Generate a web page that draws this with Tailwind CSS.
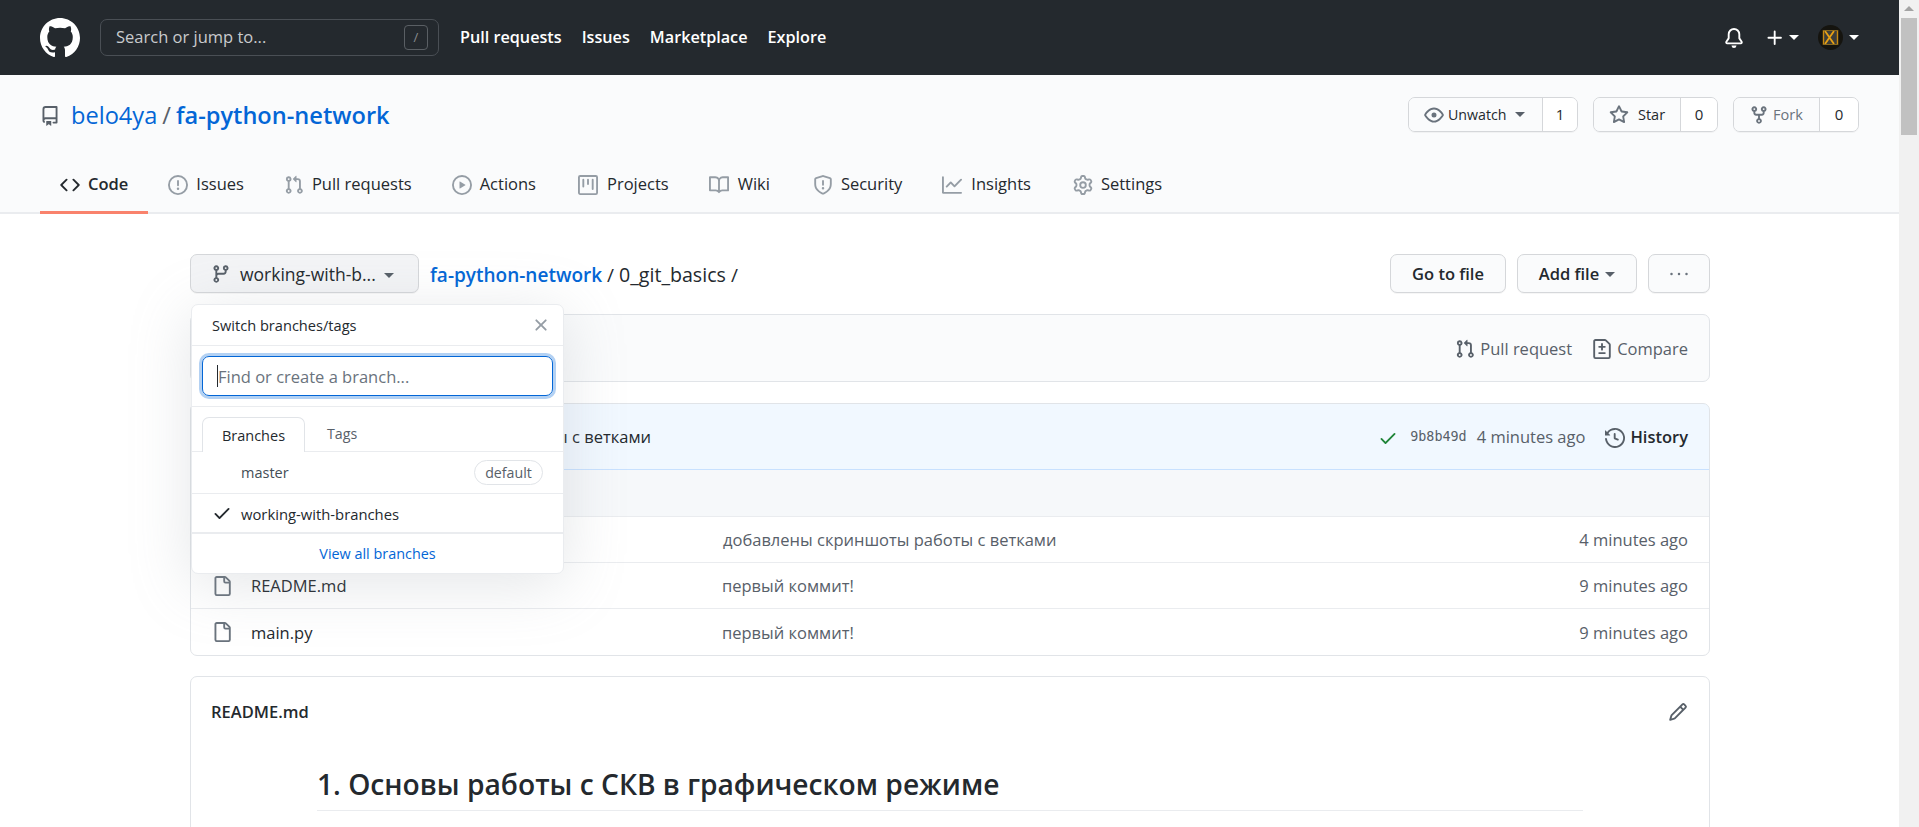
<!DOCTYPE html>
<html lang="en">
<head>
<meta charset="utf-8">
<title>fa-python-network</title>
<script src="https://cdn.jsdelivr.net/npm/@tailwindcss/browser@4"></script>
</head>
<body class="h-[827px] w-[1919px] overflow-hidden bg-white text-[#24292e] font-['Open_Sans','Noto_Sans',sans-serif] text-[16.5px]">
<div class="flex h-[827px]">
<div class="w-[1899px] h-[827px] overflow-hidden flex flex-col">

  <header class="h-[75px] shrink-0 bg-[#24292e] flex items-center pl-[40px] pr-[40px] text-white">
    <svg class="w-[40px] h-[40px] fill-white" viewBox="0 0 16 16"><path d="M8 0C3.58 0 0 3.58 0 8c0 3.54 2.29 6.53 5.47 7.59.4.07.55-.17.55-.38 0-.19-.01-.82-.01-1.49-2.01.37-2.53-.49-2.69-.94-.09-.23-.48-.94-.82-1.13-.28-.15-.68-.52-.01-.53.63-.01 1.08.58 1.23.82.72 1.21 1.87.87 2.33.66.07-.52.28-.87.51-1.07-1.78-.2-3.64-.89-3.64-3.95 0-.87.31-1.59.82-2.15-.08-.2-.36-1.02.08-2.12 0 0 .67-.21 2.2.82.64-.18 1.32-.27 2-.27.68 0 1.36.09 2 .27 1.53-1.04 2.2-.82 2.2-.82.44 1.1.16 1.92.08 2.12.51.56.82 1.27.82 2.15 0 3.07-1.87 3.75-3.65 3.95.29.25.54.73.54 1.48 0 1.07-.01 1.93-.01 2.2 0 .21.15.46.55.38A8.013 8.013 0 0016 8c0-4.42-3.58-8-8-8z"/></svg>
    <div class="ml-[20px] w-[339px] h-[37px] rounded-[7px] border border-[#4a4f55] flex items-center pl-[15px] pr-[10px] justify-between">
      <span class="text-[#c9cbcd] text-[16.5px]">Search or jump to...</span>
      <span class="w-[24px] h-[25px] rounded-[4px] border border-[#5a5f64] text-[#8a8d90] text-[13px] flex items-center justify-center">/</span>
    </div>
    <nav class="ml-[21px] flex gap-[20px] font-semibold text-[16.2px]">
      <span>Pull requests</span><span>Issues</span><span>Marketplace</span><span>Explore</span>
    </nav>
    <div class="ml-auto flex items-center">
      <svg class="w-[20px] h-[20px] fill-white" viewBox="0 0 16 16"><path d="M8 16a2 2 0 001.985-1.75c.017-.137-.097-.25-.235-.25h-3.5c-.138 0-.252.113-.235.25A2 2 0 008 16z"/><path fill-rule="evenodd" d="M8 1.5A3.5 3.5 0 004.5 5v2.947c0 .346-.102.683-.294.97l-1.703 2.556a.018.018 0 00-.003.01l.001.006c0 .002.002.004.004.006a.017.017 0 00.006.004l.007.001h10.964l.007-.001a.016.016 0 00.006-.004.016.016 0 00.004-.006l.001-.007a.017.017 0 00-.003-.01l-1.703-2.554a1.75 1.75 0 01-.294-.97V5A3.5 3.5 0 008 1.5zM3 5a5 5 0 0110 0v2.947c0 .05.015.098.042.139l1.703 2.555A1.518 1.518 0 0113.482 13H2.518a1.518 1.518 0 01-1.263-2.36l1.703-2.554A.25.25 0 003 7.947V5z"/></svg>
      <svg class="ml-[21px] w-[20px] h-[20px] fill-white" viewBox="0 0 16 16"><path d="M7.75 2a.75.75 0 01.75.75V7h4.25a.75.75 0 110 1.5H8.5v4.25a.75.75 0 11-1.5 0V8.5H2.75a.75.75 0 010-1.5H7V2.75A.75.75 0 017.75 2z"/></svg>
      <span class="ml-[4px] w-0 h-0 border-x-[5px] border-x-transparent border-t-[5px] border-t-white"></span>
      <span class="ml-[19px] w-[25px] h-[25px] rounded-full bg-[#15140f] flex items-center justify-center">
        <svg class="w-[17px] h-[17px]" viewBox="0 0 17 17" fill="none"><rect x="1" y="1" width="15" height="15" fill="#3c3d3a"/><path d="M3 2l9 13M12 2L3 15" stroke="#e8a013" stroke-width="1.8"/><path d="M1.5 1v15M15.5 1v15" stroke="#c98a10" stroke-width="1.4"/><path d="M1 1.5h15M1 15.5h15" stroke="#8a6a20" stroke-width="1"/></svg>
      </span>
      <span class="ml-[6px] w-0 h-0 border-x-[5px] border-x-transparent border-t-[5px] border-t-white"></span>
    </div>
  </header>

  <section class="h-[139px] shrink-0 bg-[#fafbfc] border-b-2 border-[#eaecef] flex flex-col">
    <div class="h-[80px] pt-[22px] pl-[40px] pr-[40px] flex justify-between items-start">
      <div class="flex items-center h-[35px] mt-[1px] text-[23.6px] text-[#0366d6]">
        <svg class="w-[20px] h-[20px] fill-[#586069] mr-[11px]" viewBox="0 0 16 16"><path fill-rule="evenodd" d="M2 2.5A2.5 2.5 0 014.5 0h8.75a.75.75 0 01.75.75v12.5a.75.75 0 01-.75.75h-2.5a.75.75 0 110-1.5h1.75v-2h-8a1 1 0 00-.714 1.7.75.75 0 01-1.072 1.05A2.495 2.495 0 012 11.5v-9zm10.5-1V9h-8c-.356 0-.694.074-1 .208V2.5a1 1 0 011-1h8zM5 12.25v3.25a.25.25 0 00.4.2l1.45-1.087a.25.25 0 01.3 0L8.6 15.7a.25.25 0 00.4-.2v-3.25a.25.25 0 00-.25-.25h-3.5a.25.25 0 00-.25.25z"/></svg>
        <span>belo4ya</span><span class="mx-[5px] text-[#586069]">/</span><span class="font-semibold">fa-python-network</span>
      </div>
      <div class="flex gap-[15px] text-[15px] h-[35px]">
        <div class="flex h-[35px] rounded-[7px] border border-[#d5d7da] overflow-hidden shadow-[0_1px_0_rgba(27,31,35,0.04)]">
          <span class="w-[134px] bg-[#fafbfc] flex items-center pl-[15px] border-r border-[#d5d7da]">
            <svg class="w-[20px] h-[20px] fill-[#6a737d] mr-[4px]" viewBox="0 0 16 16"><path fill-rule="evenodd" d="M1.679 7.932c.412-.621 1.242-1.75 2.366-2.717C5.175 4.242 6.527 3.5 8 3.5c1.473 0 2.824.742 3.955 1.715 1.124.967 1.954 2.096 2.366 2.717a.119.119 0 010 .136c-.412.621-1.242 1.75-2.366 2.717C10.825 11.758 9.473 12.5 8 12.5c-1.473 0-2.824-.742-3.955-1.715C2.92 9.818 2.09 8.69 1.679 8.068a.119.119 0 010-.136zM8 2c-1.981 0-3.67.992-4.933 2.078C1.797 5.169.88 6.423.43 7.1a1.619 1.619 0 000 1.798c.45.678 1.367 1.932 2.637 3.024C4.329 13.008 6.019 14 8 14c1.981 0 3.67-.992 4.933-2.078 1.27-1.091 2.187-2.345 2.637-3.023a1.619 1.619 0 000-1.798c-.45-.678-1.367-1.932-2.637-3.023C11.671 2.992 9.981 2 8 2zm0 8a2 2 0 100-4 2 2 0 000 4z"/></svg>
            <span class="text-[14.2px] font-medium">Unwatch</span>
            <span class="ml-[9px] w-0 h-0 border-x-[5px] border-x-transparent border-t-[5px] border-t-[#586069]"></span>
          </span>
          <span class="w-[34px] bg-white flex items-center justify-center font-medium">1</span>
        </div>
        <div class="flex h-[35px] rounded-[7px] border border-[#d5d7da] overflow-hidden shadow-[0_1px_0_rgba(27,31,35,0.04)]">
          <span class="w-[87px] bg-[#fafbfc] flex items-center pl-[15px] border-r border-[#d5d7da]">
            <svg class="w-[20px] h-[20px] fill-[#6a737d] mr-[9px]" viewBox="0 0 16 16"><path fill-rule="evenodd" d="M8 .25a.75.75 0 01.673.418l1.882 3.815 4.21.612a.75.75 0 01.416 1.279l-3.046 2.97.719 4.192a.75.75 0 01-1.088.791L8 12.347l-3.766 1.98a.75.75 0 01-1.088-.79l.72-4.194L.818 6.374a.75.75 0 01.416-1.28l4.21-.611L7.327.668A.75.75 0 018 .25zm0 2.445L6.615 5.5a.75.75 0 01-.564.41l-3.097.45 2.24 2.184a.75.75 0 01.216.664l-.528 3.084 2.769-1.456a.75.75 0 01.698 0l2.77 1.456-.53-3.084a.75.75 0 01.216-.664l2.24-2.183-3.096-.45a.75.75 0 01-.564-.41L8 2.694v.001z"/></svg>
            <span class="text-[14.5px] font-medium">Star</span>
          </span>
          <span class="w-[36px] bg-white flex items-center justify-center font-medium">0</span>
        </div>
        <div class="flex h-[35px] rounded-[7px] border border-[#d5d7da] overflow-hidden shadow-[0_1px_0_rgba(27,31,35,0.04)]">
          <span class="w-[86px] bg-[#fafbfc] flex items-center pl-[15px] border-r border-[#d5d7da]">
            <svg class="w-[20px] h-[20px] fill-[#6a737d] mr-[4px]" viewBox="0 0 16 16"><path fill-rule="evenodd" d="M5 3.25a.75.75 0 11-1.5 0 .75.75 0 011.5 0zm0 2.122a2.25 2.25 0 10-1.5 0v.878A2.25 2.25 0 005.75 8.5h1.5v2.128a2.251 2.251 0 101.5 0V8.5h1.5a2.25 2.25 0 002.25-2.25v-.878a2.25 2.25 0 10-1.5 0v.878a.75.75 0 01-.75.75h-4.5A.75.75 0 015 6.25v-.878zm3.75 7.378a.75.75 0 11-1.5 0 .75.75 0 011.5 0zm3-8.75a.75.75 0 100-1.5.75.75 0 000 1.5z"/></svg>
            <span class="text-[14.5px] font-medium text-[#6a737d]">Fork</span>
          </span>
          <span class="w-[38px] bg-white flex items-center justify-center font-medium">0</span>
        </div>
      </div>
    </div>
    <nav class="flex pl-[40px] h-[57px] pt-[2px] text-[16.5px] text-[#24292e]">
      <span class="relative flex items-center gap-[8px] px-[20px] font-semibold after:absolute after:left-0 after:right-0 after:bottom-[-2px] after:h-[3px] after:bg-[#f9826c]"><svg class="w-[20px] h-[20px] fill-[#24292e]" viewBox="0 0 16 16"><path fill-rule="evenodd" d="M4.72 3.22a.75.75 0 011.06 1.06L2.06 8l3.72 3.72a.75.75 0 11-1.06 1.06L.47 8.53a.75.75 0 010-1.06l4.25-4.25zm6.56 0a.75.75 0 10-1.06 1.06L13.94 8l-3.72 3.72a.75.75 0 101.06 1.06l4.25-4.25a.75.75 0 000-1.06l-4.25-4.25z"/></svg>Code</span>
      <span class="flex items-center gap-[8px] px-[20px]"><svg class="w-[20px] h-[20px] fill-[#959da5]" viewBox="0 0 16 16"><path fill-rule="evenodd" d="M8 1.5a6.5 6.5 0 100 13 6.5 6.5 0 000-13zM0 8a8 8 0 1116 0A8 8 0 010 8zm9 3a1 1 0 11-2 0 1 1 0 012 0zm-.25-6.25a.75.75 0 00-1.5 0v3.5a.75.75 0 001.5 0v-3.5z"/></svg>Issues</span>
      <span class="flex items-center gap-[8px] px-[20px]"><svg class="w-[20px] h-[20px] fill-[#959da5]" viewBox="0 0 16 16"><path fill-rule="evenodd" d="M7.177 3.073L9.573.677A.25.25 0 0110 .854v4.792a.25.25 0 01-.427.177L7.177 3.427a.25.25 0 010-.354zM3.75 2.5a.75.75 0 100 1.5.75.75 0 000-1.5zm-2.25.75a2.25 2.25 0 113 2.122v5.256a2.251 2.251 0 11-1.5 0V5.372A2.25 2.25 0 011.5 3.25zM11 2.5h-1V4h1a1 1 0 011 1v5.628a2.251 2.251 0 101.5 0V5A2.5 2.5 0 0011 2.5zm1 10.25a.75.75 0 111.5 0 .75.75 0 01-1.5 0zM3.75 12a.75.75 0 100 1.5.75.75 0 000-1.5z"/></svg>Pull requests</span>
      <span class="flex items-center gap-[8px] pl-[20px] pr-[22px]"><svg class="w-[20px] h-[20px] fill-[#959da5]" viewBox="0 0 16 16"><path fill-rule="evenodd" d="M1.5 8a6.5 6.5 0 1113 0 6.5 6.5 0 01-13 0zM8 0a8 8 0 100 16A8 8 0 008 0zM6.379 5.227A.25.25 0 006 5.442v5.117a.25.25 0 00.379.214l4.264-2.559a.25.25 0 000-.428L6.379 5.227z"/></svg>Actions</span>
      <span class="flex items-center gap-[9px] px-[20px]"><svg class="w-[20px] h-[20px] fill-[#959da5]" viewBox="0 0 16 16"><path fill-rule="evenodd" d="M1.75 0A1.75 1.75 0 000 1.75v12.5C0 15.216.784 16 1.75 16h12.5A1.75 1.75 0 0016 14.25V1.75A1.75 1.75 0 0014.25 0H1.75zM1.5 1.75a.25.25 0 01.25-.25h12.5a.25.25 0 01.25.25v12.5a.25.25 0 01-.25.25H1.75a.25.25 0 01-.25-.25V1.75zM11.75 3a.75.75 0 00-.75.75v7.5a.75.75 0 001.5 0v-7.5a.75.75 0 00-.75-.75zm-8.25.75a.75.75 0 011.5 0v5.5a.75.75 0 01-1.5 0v-5.5zM8 3a.75.75 0 00-.75.75v3.5a.75.75 0 001.5 0v-3.5A.75.75 0 008 3z"/></svg>Projects</span>
      <span class="flex items-center gap-[9px] pl-[20px] pr-[23px]"><svg class="w-[20px] h-[20px] fill-[#959da5]" viewBox="0 0 16 16"><path fill-rule="evenodd" d="M0 1.75A.75.75 0 01.75 1h4.253c1.227 0 2.317.59 3 1.501A3.744 3.744 0 0111.006 1h4.245a.75.75 0 01.75.75v10.5a.75.75 0 01-.75.75h-4.507a2.25 2.25 0 00-1.591.659l-.622.621a.75.75 0 01-1.06 0l-.622-.621A2.25 2.25 0 005.258 13H.75a.75.75 0 01-.75-.75V1.75zm8.755 3a2.25 2.25 0 012.25-2.25H14.5v9h-3.757c-.71 0-1.4.201-1.992.572l.004-7.322zm-1.504 7.324l.004-5.073-.002-2.253A2.25 2.25 0 005.003 2.5H1.5v9h3.757a3.75 3.75 0 011.994.574z"/></svg>Wiki</span>
      <span class="flex items-center gap-[8px] px-[20px]"><svg class="w-[20px] h-[20px] fill-[#959da5]" viewBox="0 0 16 16"><path fill-rule="evenodd" d="M7.467.133a1.75 1.75 0 011.066 0l5.25 1.68A1.75 1.75 0 0115 3.48V7c0 1.566-.32 3.182-1.303 4.682-.983 1.498-2.585 2.813-5.032 3.855a1.7 1.7 0 01-1.33 0c-2.447-1.042-4.049-2.357-5.032-3.855C1.32 10.182 1 8.566 1 7V3.48a1.75 1.75 0 011.217-1.667l5.25-1.68zm.61 1.429a.25.25 0 00-.153 0l-5.25 1.68a.25.25 0 00-.174.238V7c0 1.358.275 2.666 1.057 3.86.784 1.194 2.121 2.34 4.366 3.297a.2.2 0 00.154 0c2.245-.956 3.582-2.104 4.366-3.298C13.225 9.666 13.5 8.36 13.5 7V3.48a.25.25 0 00-.174-.237l-5.25-1.68zM9 10.5a1 1 0 11-2 0 1 1 0 012 0zm-.25-5.75a.75.75 0 10-1.5 0v3a.75.75 0 001.5 0v-3z"/></svg>Security</span>
      <span class="flex items-center gap-[9px] pl-[20px] pr-[22px]"><svg class="w-[20px] h-[20px] fill-[#959da5]" viewBox="0 0 16 16"><path fill-rule="evenodd" d="M1.5 1.75a.75.75 0 00-1.5 0v12.5c0 .414.336.75.75.75h14.5a.75.75 0 000-1.5H1.5V1.75zm14.28 2.53a.75.75 0 00-1.06-1.06L10 7.94 7.53 5.47a.75.75 0 00-1.06 0L3.22 8.72a.75.75 0 001.06 1.06L7 7.06l2.47 2.47a.75.75 0 001.06 0l5.25-5.25z"/></svg>Insights</span>
      <span class="flex items-center gap-[8px] px-[20px]"><svg class="w-[20px] h-[20px] fill-[#959da5]" viewBox="0 0 16 16"><path fill-rule="evenodd" d="M7.429 1.525a6.593 6.593 0 011.142 0c.036.003.108.036.137.146l.289 1.105c.147.56.55.967.997 1.189.174.086.341.183.501.29.417.278.97.423 1.53.27l1.102-.303c.11-.03.175.016.195.046.219.31.41.641.573.989.014.031.022.11-.059.19l-.815.806c-.411.406-.562.957-.53 1.456a4.588 4.588 0 010 .582c-.032.499.119 1.05.53 1.456l.815.806c.08.08.073.159.059.19a6.494 6.494 0 01-.573.99c-.02.029-.086.074-.195.045l-1.103-.303c-.559-.153-1.112-.008-1.529.27-.16.107-.327.204-.5.29-.449.222-.851.628-.998 1.189l-.289 1.105c-.029.11-.101.143-.137.146a6.613 6.613 0 01-1.142 0c-.036-.003-.108-.037-.137-.146l-.289-1.105c-.147-.56-.55-.967-.997-1.189a4.502 4.502 0 01-.501-.29c-.417-.278-.97-.423-1.53-.27l-1.102.303c-.11.03-.175-.016-.195-.046a6.492 6.492 0 01-.573-.989c-.014-.031-.022-.11.059-.19l.815-.806c.411-.406.562-.957.53-1.456a4.587 4.587 0 010-.582c.032-.499-.119-1.05-.53-1.456l-.815-.806c-.08-.08-.073-.159-.059-.19a6.44 6.44 0 01.573-.99c.02-.029.086-.075.195-.045l1.103.303c.559.153 1.112.008 1.529-.27.16-.107.327-.204.5-.29.449-.222.851-.628.998-1.189l.289-1.105c.029-.11.101-.143.137-.146zM8 0c-.236 0-.47.01-.701.03-.743.065-1.29.615-1.458 1.261l-.29 1.106c-.017.066-.078.158-.211.224a5.994 5.994 0 00-.668.386c-.123.082-.233.09-.3.071L3.27 2.776c-.644-.177-1.392.02-1.82.63a7.977 7.977 0 00-.704 1.217c-.315.675-.111 1.422.363 1.891l.815.806c.05.048.098.147.088.294a6.084 6.084 0 000 .772c.01.147-.038.246-.088.294l-.815.806c-.474.469-.678 1.216-.363 1.891.2.428.436.835.704 1.218.428.609 1.176.806 1.82.63l1.103-.303c.066-.019.176-.011.299.071.213.143.436.272.668.386.133.066.194.158.212.224l.289 1.106c.169.646.715 1.196 1.458 1.26a8.094 8.094 0 001.402 0c.743-.064 1.29-.614 1.458-1.26l.29-1.106c.017-.066.078-.158.211-.224a5.98 5.98 0 00.668-.386c.123-.082.233-.09.3-.071l1.102.302c.644.177 1.392-.02 1.82-.63.268-.382.505-.789.704-1.217.315-.675.111-1.422-.364-1.891l-.814-.806c-.05-.048-.098-.147-.088-.294a6.1 6.1 0 000-.772c-.01-.147.039-.246.088-.294l.814-.806c.475-.469.679-1.216.364-1.891a7.992 7.992 0 00-.704-1.218c-.428-.609-1.176-.806-1.82-.63l-1.103.303c-.066.019-.176.011-.299-.071a5.991 5.991 0 00-.668-.386c-.133-.066-.194-.158-.212-.224L10.16 1.29C9.99.645 9.444.095 8.701.031A8.094 8.094 0 008 0zm1.5 8a1.5 1.5 0 11-3 0 1.5 1.5 0 013 0zM11 8a3 3 0 11-6 0 3 3 0 016 0z"/></svg>Settings</span>
    </nav>
  </section>

  <main class="pt-[40px] pl-[190px] w-[1710px] flex flex-col">
    <div class="relative flex items-center h-[39px] shrink-0">
      <button class="w-[229px] h-[39px] rounded-[7px] bg-[#f3f4f6] border border-[#d5d7da] flex items-center pl-[20px] text-[17.5px] font-medium shadow-[0_1px_0_rgba(27,31,35,0.04)]">
        <svg class="w-[20px] h-[20px] fill-[#586069] mr-[9px]" viewBox="0 0 16 16"><path fill-rule="evenodd" d="M11.75 2.5a.75.75 0 100 1.5.75.75 0 000-1.5zm-2.25.75a2.25 2.25 0 113 2.122V6A2.5 2.5 0 0110 8.5H6a1 1 0 00-1 1v1.128a2.251 2.251 0 11-1.5 0V5.372a2.25 2.25 0 111.5 0v1.836A2.492 2.492 0 016 7h4a1 1 0 001-1v-.628A2.25 2.25 0 019.5 3.25zM4.25 12a.75.75 0 100 1.5.75.75 0 000-1.5zM3.5 3.25a.75.75 0 111.5 0 .75.75 0 01-1.5 0z"/></svg>
        <span class="relative top-[1px]">working-with-b...</span>
        <span class="ml-[8px] relative top-[2px] w-0 h-0 border-x-[5px] border-x-transparent border-t-[5px] border-t-[#586069]"></span>
      </button>
      <div class="ml-[11px] text-[19px] flex items-center pt-[3px]">
        <span class="text-[#0366d6] font-semibold">fa-python-network</span><span class="mx-[5px]">/</span><span class="font-medium text-[19.6px]">0_git_basics</span><span class="mx-[5px]">/</span>
      </div>
      <div class="ml-auto flex gap-[11px] text-[16.5px] font-semibold">
        <span class="w-[116px] h-[39px] pt-[2px] rounded-[7px] bg-[#fafbfc] border border-[#d5d7da] flex items-center justify-center shadow-[0_1px_0_rgba(27,31,35,0.04)]">Go to file</span>
        <span class="w-[120px] h-[39px] pt-[2px] rounded-[7px] bg-[#fafbfc] border border-[#d5d7da] flex items-center justify-center gap-[6px] shadow-[0_1px_0_rgba(27,31,35,0.04)]">Add file<span class="w-0 h-0 border-x-[5px] border-x-transparent border-t-[5px] border-t-[#586069]"></span></span>
        <span class="w-[62px] h-[39px] rounded-[7px] bg-[#fafbfc] border border-[#d5d7da] flex items-center justify-center shadow-[0_1px_0_rgba(27,31,35,0.04)]"><svg class="w-[20px] h-[20px] fill-[#6a737d]" viewBox="0 0 16 16"><path d="M8 9a1 1 0 100-2 1 1 0 000 2zM2 9a1 1 0 100-2 1 1 0 000 2zm12 0a1 1 0 100-2 1 1 0 000 2z"/></svg></span>
      </div>

      <div class="absolute z-10 left-[1px] top-[50px] w-[373px] h-[270px] bg-white rounded-[7px] border border-[#eaecef] shadow-[0_10px_60px_rgba(149,157,165,0.25)] flex flex-col text-[14.6px]">
        <div class="h-[41px] shrink-0 border-b border-[#eaecef] flex items-center justify-between pl-[20px] pr-[12px] font-medium">
          <span class="relative top-[1px]">Switch branches/tags</span>
          <svg class="w-[20px] h-[20px] fill-[#959da5]" viewBox="0 0 16 16"><path fill-rule="evenodd" d="M3.72 3.72a.75.75 0 011.06 0L8 6.94l3.22-3.22a.75.75 0 111.06 1.06L9.06 8l3.22 3.22a.75.75 0 11-1.06 1.06L8 9.06l-3.22 3.22a.75.75 0 01-1.06-1.06L6.94 8 3.72 4.78a.75.75 0 010-1.06z"/></svg>
        </div>
        <div class="h-[61px] shrink-0 border-b border-[#eaecef] px-[10px] pt-[10px]">
          <div class="h-[40px] pt-[3px] rounded-[7px] border border-[#0366d6] shadow-[0_0_0_3px_rgba(3,102,214,0.3)] flex items-center pl-[14px] text-[16.5px] text-[#6a737d]"><span class="relative top-[-2px] w-px h-[22px] bg-[#24292e]"></span>Find or create a branch...</div>
        </div>
        <div class="h-[45px] shrink-0 flex items-end pl-[10px] border-b border-[#eaecef] text-[14.5px]">
          <span class="relative top-[1px] w-[103px] h-[35px] pt-[1px] bg-white border border-b-0 border-[#e1e4e8] rounded-t-[7px] flex items-center justify-center font-medium">Branches</span>
          <span class="ml-[22px] h-[35px] pt-[1px] flex items-center text-[#586069] text-[14.2px] font-medium">Tags</span>
        </div>
        <div class="h-[42px] shrink-0 border-b border-[#eaecef] flex items-center pl-[49px] pr-[20px] justify-between text-[14.5px] text-[#444d56]">
          <span>master</span>
          <span class="h-[25px] w-[69px] rounded-full border border-[#e1e4e8] flex items-center justify-center text-[#586069] font-medium text-[14.2px]">default</span>
        </div>
        <div class="h-[40px] shrink-0 border-b-2 border-[#eaecef] flex items-center pl-[22px] text-[14.8px] text-[#24292e]">
          <svg class="w-[20px] h-[20px] fill-[#24292e] mr-[9px] -ml-[2px]" viewBox="0 0 16 16"><path fill-rule="evenodd" d="M13.78 4.22a.75.75 0 010 1.06l-7.25 7.25a.75.75 0 01-1.06 0L2.22 9.28a.75.75 0 011.06-1.06L6 10.94l6.72-6.72a.75.75 0 011.06 0z"/></svg>
          <span class="font-medium relative top-[1px]">working-with-branches</span>
        </div>
        <div class="flex-1 flex items-center justify-center pt-[1px] text-[#0366d6] text-[14.4px]">View all branches</div>
      </div>
    </div>

    <div class="mt-[21px] h-[68px] pt-[2px] shrink-0 rounded-[7px] border border-[#e1e4e8] bg-[#fafbfc] flex items-center justify-end pr-[21px] text-[16.5px] text-[#586069]">
      <svg class="w-[20px] h-[20px] fill-[#586069] mr-[5px]" viewBox="0 0 16 16"><path fill-rule="evenodd" d="M7.177 3.073L9.573.677A.25.25 0 0110 .854v4.792a.25.25 0 01-.427.177L7.177 3.427a.25.25 0 010-.354zM3.75 2.5a.75.75 0 100 1.5.75.75 0 000-1.5zm-2.25.75a2.25 2.25 0 113 2.122v5.256a2.251 2.251 0 11-1.5 0V5.372A2.25 2.25 0 011.5 3.25zM11 2.5h-1V4h1a1 1 0 011 1v5.628a2.251 2.251 0 101.5 0V5A2.5 2.5 0 0011 2.5zm1 10.25a.75.75 0 111.5 0 .75.75 0 01-1.5 0zM3.75 12a.75.75 0 100 1.5.75.75 0 000-1.5z"/></svg>
      <span>Pull request</span>
      <svg class="ml-[20px] w-[20px] h-[20px] fill-[#586069] mr-[5px]" viewBox="0 0 16 16"><path fill-rule="evenodd" d="M2.75 1.5a.25.25 0 00-.25.25v12.5c0 .138.112.25.25.25h10.5a.25.25 0 00.25-.25V4.664a.25.25 0 00-.073-.177l-2.914-2.914a.25.25 0 00-.177-.073H2.75zM1 1.75C1 .784 1.784 0 2.75 0h7.586c.464 0 .909.184 1.237.513l2.914 2.914c.329.328.513.773.513 1.237v9.586A1.75 1.75 0 0113.25 16H2.75A1.75 1.75 0 011 14.25V1.75zm7 1.5a.75.75 0 01.75.75v1.5h1.5a.75.75 0 010 1.5h-1.5v1.5a.75.75 0 01-1.5 0V7h-1.5a.75.75 0 010-1.5h1.5V4A.75.75 0 018 3.25zm-3 8a.75.75 0 01.75-.75h4.5a.75.75 0 010 1.5h-4.5a.75.75 0 01-.75-.75z"/></svg>
      <span>Compare</span>
    </div>

    <div class="mt-[21px] shrink-0 rounded-[7px] border border-[#e1e4e8] overflow-hidden">
      <div class="h-[67px] pt-[2px] -mx-px -mt-px bg-[#f1f8ff] border border-[#c8e1ff] rounded-t-[7px] flex items-center pr-[21px]">
        <span class="w-[460px] shrink-0 text-right text-[16.5px]">работы с ветками</span>
        <span class="ml-auto flex items-center">
          <svg class="w-[20px] h-[20px] fill-[#22863a] mr-[12px]" viewBox="0 0 16 16"><path fill-rule="evenodd" d="M13.78 4.22a.75.75 0 010 1.06l-7.25 7.25a.75.75 0 01-1.06 0L2.22 9.28a.75.75 0 011.06-1.06L6 10.94l6.72-6.72a.75.75 0 011.06 0z"/></svg>
          <span class="font-['DejaVu_Sans_Mono','Liberation_Mono',monospace] text-[13.4px] text-[#586069]">9b8b49d</span>
          <span class="ml-[10px] text-[#586069]">4 minutes ago</span>
          <svg class="ml-[20px] w-[20px] h-[20px] fill-[#586069] mr-[5px]" viewBox="0 0 16 16"><path fill-rule="evenodd" d="M1.643 3.143L.427 1.927A.25.25 0 000 2.104V5.75c0 .138.112.25.25.25h3.646a.25.25 0 00.177-.427L2.715 4.215a6.5 6.5 0 11-1.18 4.458.75.75 0 10-1.493.154 8.001 8.001 0 101.6-5.684zM7.75 4a.75.75 0 01.75.75v2.992l2.028.812a.75.75 0 01-.557 1.392l-2.5-1A.75.75 0 017 8.25v-3.5A.75.75 0 017.75 4z"/></svg>
          <span class="font-semibold">History</span>
        </span>
      </div>
      <div class="h-[47px] bg-[#f6f8fa] border-b border-[#eaecef]"></div>
      <div class="h-[46px] pt-[2px] border-b border-[#eaecef] flex items-center pr-[21px] text-[#586069]">
        <span class="w-[532px] shrink-0"></span><span>добавлены скриншоты работы с ветками</span><span class="ml-auto">4 minutes ago</span>
      </div>
      <div class="h-[46px] pt-[2px] border-b border-[#eaecef] flex items-center pl-[21px] pr-[21px] text-[#586069]">
        <svg class="relative top-[-1px] w-[20px] h-[20px] fill-[#6a737d] mr-[19px] shrink-0" viewBox="0 0 16 16"><path fill-rule="evenodd" d="M3.75 1.5a.25.25 0 00-.25.25v12.5c0 .138.112.25.25.25h9.5a.25.25 0 00.25-.25V6h-2.75A1.75 1.75 0 019 4.25V1.5H3.75zm6.75.062V4.25c0 .138.112.25.25.25h2.688a.252.252 0 00-.011-.013l-2.914-2.914a.272.272 0 00-.013-.011zM2 1.75C2 .784 2.784 0 3.75 0h6.586c.464 0 .909.184 1.237.513l2.914 2.914c.329.328.513.773.513 1.237v9.586A1.75 1.75 0 0113.25 16h-9.5A1.75 1.75 0 012 14.25V1.75z"/></svg>
        <span class="w-[471px] shrink-0 text-[#24292e]">README.md</span><span>первый коммит!</span><span class="ml-auto">9 minutes ago</span>
      </div>
      <div class="h-[46px] pt-[2px] flex items-center pl-[21px] pr-[21px] text-[#586069]">
        <svg class="relative top-[-1px] w-[20px] h-[20px] fill-[#6a737d] mr-[19px] shrink-0" viewBox="0 0 16 16"><path fill-rule="evenodd" d="M3.75 1.5a.25.25 0 00-.25.25v12.5c0 .138.112.25.25.25h9.5a.25.25 0 00.25-.25V6h-2.75A1.75 1.75 0 019 4.25V1.5H3.75zm6.75.062V4.25c0 .138.112.25.25.25h2.688a.252.252 0 00-.011-.013l-2.914-2.914a.272.272 0 00-.013-.011zM2 1.75C2 .784 2.784 0 3.75 0h6.586c.464 0 .909.184 1.237.513l2.914 2.914c.329.328.513.773.513 1.237v9.586A1.75 1.75 0 0113.25 16h-9.5A1.75 1.75 0 012 14.25V1.75z"/></svg>
        <span class="w-[471px] shrink-0 text-[#24292e]">main.py</span><span>первый коммит!</span><span class="ml-auto">9 minutes ago</span>
      </div>
    </div>

    <div class="mt-[20px] shrink-0 h-[300px] rounded-[7px] border border-[#e1e4e8]">
      <div class="h-[70px] flex items-center justify-between pl-[20px] pr-[21px] font-semibold">
        <span>README.md</span>
        <svg class="w-[20px] h-[20px] fill-[#586069]" viewBox="0 0 16 16"><path fill-rule="evenodd" d="M11.013 1.427a1.75 1.75 0 012.474 0l1.086 1.086a1.75 1.75 0 010 2.474l-8.61 8.61c-.21.21-.47.364-.756.445l-3.251.93a.75.75 0 01-.927-.928l.929-3.25a1.75 1.75 0 01.445-.758l8.61-8.61zm1.414 1.06a.25.25 0 00-.354 0L10.811 3.75l1.439 1.44 1.263-1.263a.25.25 0 000-.354l-1.086-1.086zM11.189 6.25L9.75 4.81l-6.286 6.287a.25.25 0 00-.064.108l-.558 1.953 1.953-.558a.249.249 0 00.108-.064l6.286-6.286z"/></svg>
      </div>
      <div class="mx-[126px] pt-[17px]">
        <h1 class="h-[47px] border-b border-[#eaecef] text-[28.2px] font-semibold leading-[40px]">1. Основы работы с СКВ в графическом режиме</h1>
      </div>
    </div>
  </main>
</div>

<aside class="w-[20px] h-[827px] bg-[#f1f1f1] flex flex-col items-center shrink-0">
  <span class="mt-[6px] w-0 h-0 border-x-[5px] border-x-transparent border-b-[5px] border-b-[#a3a3a3]"></span>
  <span class="mt-[7px] w-[16px] h-[117px] bg-[#c1c1c1]"></span>
</aside>
</div>
</body>
</html>
